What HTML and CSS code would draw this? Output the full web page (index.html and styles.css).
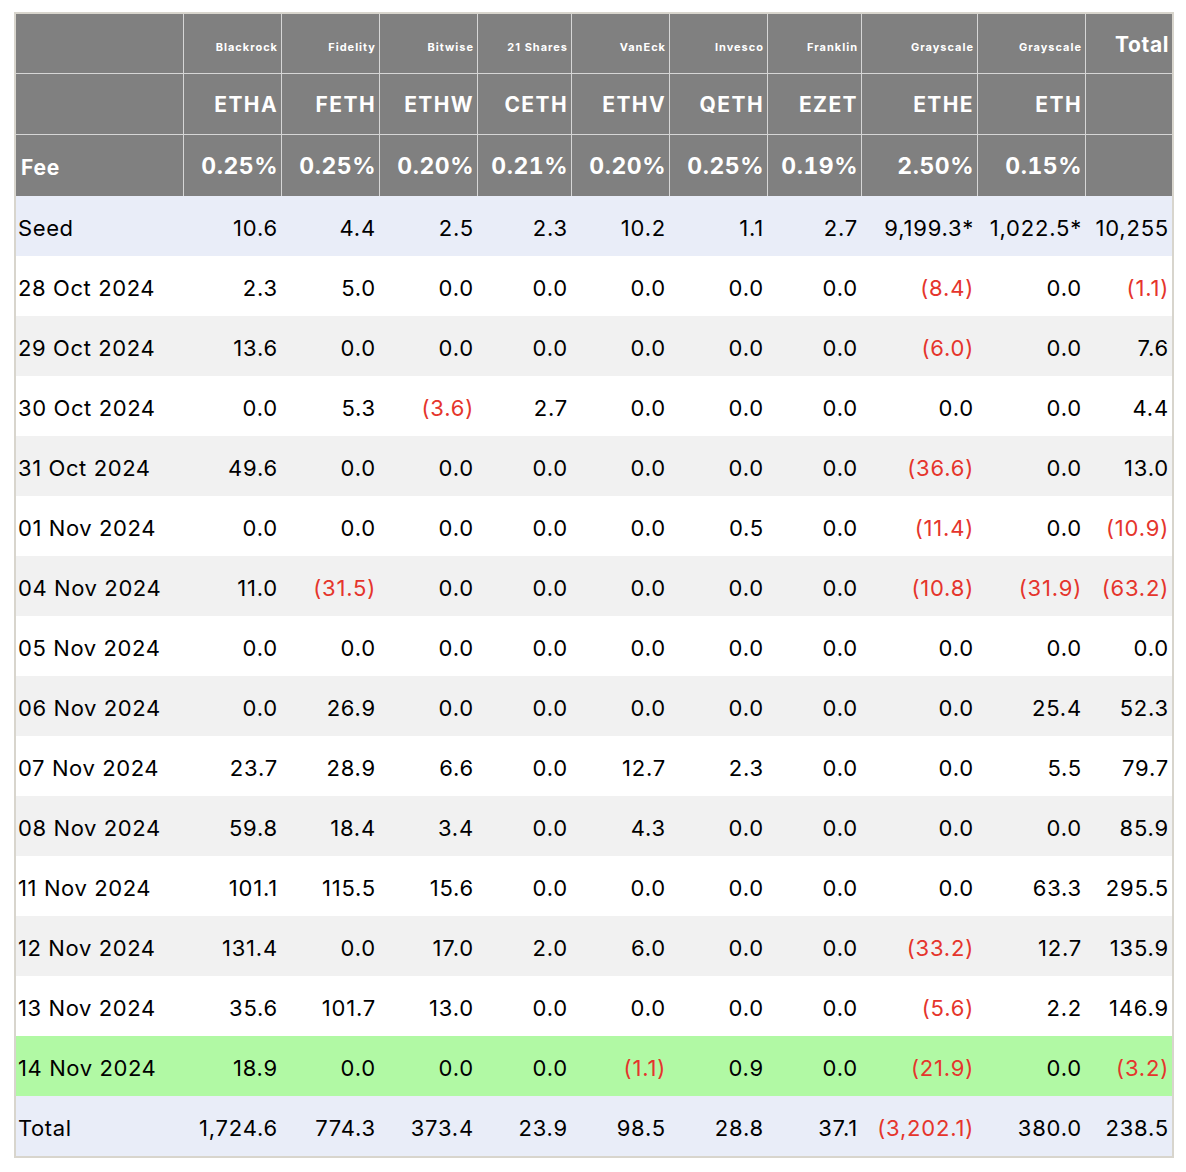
FILE: index.html
```html
<!DOCTYPE html>
<html>
<head>
<meta charset="utf-8">
<link rel="stylesheet" href="styles.css">
</head>
<body>
<table class="flows">
<colgroup>
<col class="c-label"><col class="c-98"><col class="c-98"><col class="c-98"><col class="c-94"><col class="c-98"><col class="c-98"><col class="c-94"><col class="c-116"><col class="c-108"><col class="c-87">
</colgroup>
<thead>
<tr class="h-issuer">
<th class="lbl"></th><th>Blackrock</th><th>Fidelity</th><th>Bitwise</th><th>21 Shares</th><th>VanEck</th><th>Invesco</th><th>Franklin</th><th>Grayscale</th><th>Grayscale</th><th class="total-h">Total</th>
</tr>
<tr class="h-ticker">
<th class="lbl"></th><th>ETHA</th><th>FETH</th><th>ETHW</th><th>CETH</th><th>ETHV</th><th>QETH</th><th>EZET</th><th>ETHE</th><th>ETH</th><th></th>
</tr>
<tr class="h-fee">
<th class="lbl">Fee</th><th>0.25%</th><th>0.25%</th><th>0.20%</th><th>0.21%</th><th>0.20%</th><th>0.25%</th><th>0.19%</th><th>2.50%</th><th>0.15%</th><th></th>
</tr>
</thead>
<tbody>
<tr class="r-seed"><td>Seed</td><td>10.6</td><td>4.4</td><td>2.5</td><td>2.3</td><td>10.2</td><td>1.1</td><td>2.7</td><td>9,199.3*</td><td>1,022.5*</td><td>10,255</td></tr>
<tr class="r-white"><td>28 Oct 2024</td><td>2.3</td><td>5.0</td><td>0.0</td><td>0.0</td><td>0.0</td><td>0.0</td><td>0.0</td><td class="neg">(8.4)</td><td>0.0</td><td class="neg">(1.1)</td></tr>
<tr class="r-grey"><td>29 Oct 2024</td><td>13.6</td><td>0.0</td><td>0.0</td><td>0.0</td><td>0.0</td><td>0.0</td><td>0.0</td><td class="neg">(6.0)</td><td>0.0</td><td>7.6</td></tr>
<tr class="r-white"><td>30 Oct 2024</td><td>0.0</td><td>5.3</td><td class="neg">(3.6)</td><td>2.7</td><td>0.0</td><td>0.0</td><td>0.0</td><td>0.0</td><td>0.0</td><td>4.4</td></tr>
<tr class="r-grey"><td>31 Oct 2024</td><td>49.6</td><td>0.0</td><td>0.0</td><td>0.0</td><td>0.0</td><td>0.0</td><td>0.0</td><td class="neg">(36.6)</td><td>0.0</td><td>13.0</td></tr>
<tr class="r-white"><td>01 Nov 2024</td><td>0.0</td><td>0.0</td><td>0.0</td><td>0.0</td><td>0.0</td><td>0.5</td><td>0.0</td><td class="neg">(11.4)</td><td>0.0</td><td class="neg">(10.9)</td></tr>
<tr class="r-grey"><td>04 Nov 2024</td><td>11.0</td><td class="neg">(31.5)</td><td>0.0</td><td>0.0</td><td>0.0</td><td>0.0</td><td>0.0</td><td class="neg">(10.8)</td><td class="neg">(31.9)</td><td class="neg">(63.2)</td></tr>
<tr class="r-white"><td>05 Nov 2024</td><td>0.0</td><td>0.0</td><td>0.0</td><td>0.0</td><td>0.0</td><td>0.0</td><td>0.0</td><td>0.0</td><td>0.0</td><td>0.0</td></tr>
<tr class="r-grey"><td>06 Nov 2024</td><td>0.0</td><td>26.9</td><td>0.0</td><td>0.0</td><td>0.0</td><td>0.0</td><td>0.0</td><td>0.0</td><td>25.4</td><td>52.3</td></tr>
<tr class="r-white"><td>07 Nov 2024</td><td>23.7</td><td>28.9</td><td>6.6</td><td>0.0</td><td>12.7</td><td>2.3</td><td>0.0</td><td>0.0</td><td>5.5</td><td>79.7</td></tr>
<tr class="r-grey"><td>08 Nov 2024</td><td>59.8</td><td>18.4</td><td>3.4</td><td>0.0</td><td>4.3</td><td>0.0</td><td>0.0</td><td>0.0</td><td>0.0</td><td>85.9</td></tr>
<tr class="r-white"><td>11 Nov 2024</td><td>101.1</td><td>115.5</td><td>15.6</td><td>0.0</td><td>0.0</td><td>0.0</td><td>0.0</td><td>0.0</td><td>63.3</td><td>295.5</td></tr>
<tr class="r-grey"><td>12 Nov 2024</td><td>131.4</td><td>0.0</td><td>17.0</td><td>2.0</td><td>6.0</td><td>0.0</td><td>0.0</td><td class="neg">(33.2)</td><td>12.7</td><td>135.9</td></tr>
<tr class="r-white"><td>13 Nov 2024</td><td>35.6</td><td>101.7</td><td>13.0</td><td>0.0</td><td>0.0</td><td>0.0</td><td>0.0</td><td class="neg">(5.6)</td><td>2.2</td><td>146.9</td></tr>
<tr class="r-today"><td>14 Nov 2024</td><td>18.9</td><td>0.0</td><td>0.0</td><td>0.0</td><td class="neg">(1.1)</td><td>0.9</td><td>0.0</td><td class="neg">(21.9)</td><td>0.0</td><td class="neg">(3.2)</td></tr>
<tr class="r-total"><td>Total</td><td>1,724.6</td><td>774.3</td><td>373.4</td><td>23.9</td><td>98.5</td><td>28.8</td><td>37.1</td><td class="neg">(3,202.1)</td><td>380.0</td><td>238.5</td></tr>
</tbody>
</table>
</body>
</html>
```
FILE: styles.css
```css
html, body {
  margin: 0;
  padding: 0;
  background: #ffffff;
}
body {
  padding: 12px 0 0 14px;
  font-family: Inter, "Liberation Sans", sans-serif;
  color: #000;
}
.flows {
  table-layout: fixed;
  width: 1160px;
  border-collapse: separate;
  border-spacing: 0;
  border: 2px solid #d8d5cd;
}
.c-label { width: 167px; }
.c-98 { width: 98px; }
.c-94 { width: 94px; }
.c-116 { width: 116px; }
.c-108 { width: 108px; }
.c-87 { width: 87px; }

.flows th {
  background: #808080;
  color: #ffffff;
  font-weight: 700;
  text-align: right;
  vertical-align: bottom;
  line-height: 1;
  padding: 0 3px 0 0;
  white-space: nowrap;
  border-left: 1px solid #d6d6d6;
  box-sizing: border-box;
}
.flows th.lbl {
  border-left: none;
  text-align: left;
  padding-left: 5px;
}
.h-issuer th, .h-ticker th {
  border-bottom: 1px solid #d6d6d6;
}
.h-issuer th {
  height: 60px;
  font-size: 11px;
  letter-spacing: 1px;
  padding-bottom: 20px;
}
.h-issuer th.total-h {
  font-size: 21px;
  letter-spacing: 0.6px;
  padding-bottom: 18px;
}
.h-ticker th {
  height: 61px;
  font-size: 21px;
  letter-spacing: 1.4px;
  padding-bottom: 19px;
}
.h-fee th {
  height: 61px;
  font-size: 23px;
  letter-spacing: 0.5px;
  padding-bottom: 18px;
  font-variant-numeric: tabular-nums;
}
.h-fee th.lbl {
  font-size: 21px;
  letter-spacing: 0.8px;
}

.flows td {
  height: 60px;
  box-sizing: border-box;
  font-size: 22px;
  line-height: 1;
  text-align: right;
  vertical-align: bottom;
  padding: 0 3px 17px 0;
  white-space: nowrap;
  letter-spacing: 0.8px;
}
.flows td:first-child {
  text-align: left;
  padding-left: 2px;
  letter-spacing: 0.6px;
}
.r-seed td, .r-total td { background: #e9edf8; }
.r-white td { background: #ffffff; }
.r-grey td { background: #f1f1f1; }
.r-today td { background: #b1f9a4; }
.flows td.neg { color: #e5352c; }
```
